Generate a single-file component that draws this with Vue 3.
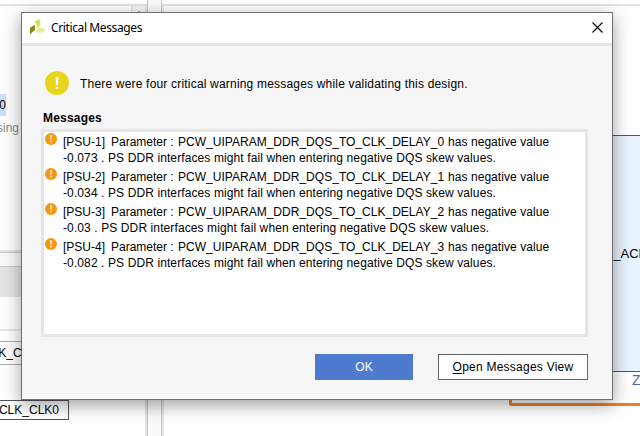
<script setup>
const messages = [
  { id: 1, value: '-0.073', param: 0 },
  { id: 2, value: '-0.034', param: 1 },
  { id: 3, value: '-0.03', param: 2 },
  { id: 4, value: '-0.082', param: 3 },
]
</script>

<template>
  <div class="screen">
    <div class="workspace">
      <div class="left">
        <div class="strip"></div>
        <div class="doc">
          <div class="doctext">
            <span class="sel">0</span>
            <span class="hint">sing</span>
          </div>
          <div class="scroll"><i></i></div>
        </div>
        <div class="gap"></div>
        <div class="tabs"></div>
        <div class="blank"></div>
        <div class="ports">
          <div class="port faint"><span>K_CLK0</span></div>
          <div class="port dark"><span>CLK_CLK0</span></div>
        </div>
      </div>
      <div class="splitter"></div>
      <div class="right">
        <div class="strip"></div>
        <div class="canvas">
          <div class="select"></div>
          <div class="block"><span class="pin">0_ACL</span></div>
          <span class="zynq">Z</span>
        </div>
      </div>
    </div>

    <section class="dialog">
      <header class="title">
        <svg class="logo" width="16" height="16" viewBox="0 0 16 16">
          <path d="M4.2 2.2 9.8 0 10.4 5 8.8 8.2 7.2 8.8 6.6 5.2z" fill="#dbe05a" />
          <path d="M0 8.8 5 5.8V11L0 15.2z" fill="#8a8b0c" />
          <path d="M8 9 10.8 8.2 15.8 11.4 11.5 14 5.8 13.2 6.2 11.2z" fill="#e8eb9c" />
        </svg>
        <span class="name">Critical Messages</span>
        <svg class="close" width="11" height="11" viewBox="0 0 11 11">
          <path d="M.5.5 10.5 10.5M10.5.5.5 10.5" stroke="#000" stroke-width="1.1" />
        </svg>
      </header>
      <div class="summary">
        <svg width="24" height="24" viewBox="0 0 24 24">
          <circle cx="12" cy="12" r="12" fill="#e8d41d" />
          <path d="M10.6 6h2.8l-.4 8h-2z" fill="#fff" />
          <rect x="10.8" y="15.8" width="2.4" height="2.2" fill="#fff" />
        </svg>
        <span>There were four critical warning messages while validating this design.</span>
      </div>
      <h2>Messages</h2>
      <div class="list">
        <div v-for="m in messages" :key="m.id" class="item">
          <svg width="12" height="12" viewBox="0 0 12 12">
            <circle cx="6" cy="6" r="6" fill="#fa9710" />
            <path d="M5 2.3h2l-.3 4.5H5.3z" fill="#fff0d4" />
            <rect x="5.1" y="7.8" width="1.8" height="1.5" fill="#fff0d4" />
          </svg>
          <div class="lines">
            <div class="l1"><span class="tag">[PSU-{{ m.id }}]</span><span class="word">Parameter :</span><span class="param">PCW_UIPARAM_DDR_DQS_TO_CLK_DELAY_{{ m.param }}</span><span class="tail">has negative value</span></div>
            <div class="l2">{{ m.value }} . PS DDR interfaces might fail when entering negative DQS skew values.</div>
          </div>
        </div>
      </div>
      <footer>
        <button class="ok">OK</button>
        <button class="open"><u>O</u>pen Messages View</button>
      </footer>
    </section>
  </div>
</template>

<style>
body { margin: 0; overflow: hidden; }
</style>

<style scoped>
.screen { position: relative; width: 640px; height: 436px; overflow: hidden; background: #fff; font: 12px/16px "Liberation Sans", Arial, sans-serif; color: #000; box-sizing: border-box; }
.screen * { box-sizing: border-box; }
.workspace { display: flex; height: 436px; }
.left { display: flex; flex-direction: column; width: 148px; border-right: 1px solid #c4c4c4; }
.strip { height: 6px; border-bottom: 2px solid #e3e3e3; background: #fff; flex: none; }
.doc { display: flex; justify-content: space-between; height: 247px; border-bottom: 1px solid #c8c8c8; border-right: 2px solid #e5e5e5; box-shadow: inset 0 -2px #e5e5e5; }
.doctext { display: flex; flex-direction: column; width: 20px; padding-top: 88px; }
.sel { width: 6px; height: 22px; line-height: 22px; background: #ccdfff; display: flex; justify-content: flex-end; }
.hint { display: flex; justify-content: flex-end; margin-top: 4px; width: 19px; color: #888; }
.scroll { width: 14px; border-left: 1px solid #ddd; background: #f6f6f6; display: flex; justify-content: center; padding-top: 5px; }
.scroll i { width: 0; height: 0; border: 3px solid transparent; border-top: 0; border-bottom: 3px solid #555; }
.gap { height: 13px; background: #fafafa; }
.tabs { height: 31px; background: #e5e5e5; border-top: 1px solid #c8c8c8; }
.blank { height: 34px; border-bottom: 2px solid #e5e5e5; }
.ports { flex: 1; padding-top: 10px; border-right: 2px solid #e5e5e5; }
.port { display: flex; justify-content: flex-end; align-items: center; }
.faint { width: 60px; height: 24px; border: solid #aaa; border-width: 1px 0; padding-right: 17px; }
.dark { width: 69px; height: 20px; margin-top: 35px; border: 1px solid #555; border-left: 0; padding-right: 9px; }
.splitter { width: 13px; background: #fafafa; }
.right { flex: 1; border-left: 1px solid #c8c8c8; box-shadow: inset 2px 0 #e5e5e5; display: flex; flex-direction: column; }
.canvas { position: relative; flex: 1; overflow: hidden; }
.select { position: absolute; left: 347px; top: 180px; width: 180px; height: 220px; border: 3px solid #f37f21; border-radius: 2px; }
.block { position: absolute; left: 378px; top: 129px; width: 120px; height: 237px; background: #e9f2ff; border: 1px solid #3c589c; }
.pin { position: absolute; left: 65px; top: 110px; font-size: 13px; }
.zynq { position: absolute; left: 470px; top: 366px; font-size: 14px; color: #4868a8; }

.dialog { position: absolute; left: 21px; top: 12px; width: 592px; height: 388px; display: flex; flex-direction: column; background: #f6f6f6; border: 1px solid #707070; box-shadow: 0 5px 17px rgba(0, 0, 0, .38); }
.title { display: flex; align-items: center; flex: none; height: 33px; background: #fff; border-bottom: 3px solid #e5e5e5; padding: 0 9px 0 8px; }
.logo { margin-top: -3px; }
.name { margin-left: 5px; flex: 1; font-family: "Noto Sans", sans-serif; font-size: 12px; letter-spacing: -.38px; }
.close { margin-top: -2px; }
.summary { display: flex; align-items: center; gap: 11px; padding: 25px 0 0 23px; height: 49px; white-space: nowrap; letter-spacing: .19px; }
.summary span { padding-top: 2px; }
h2 { margin: 15px 0 0 21px; font-size: 12px; line-height: 17px; height: 16px; font-weight: bold; letter-spacing: .2px; }
.list { margin: 3px 0 0 19px; width: 547px; height: 208px; background: #fff; border: 3px solid #e5e5e5; padding: 1px 0 0 1px; }
.item { display: flex; height: 35px; gap: 6px; }
.item svg { flex: none; }
.lines { padding-top: 1px; white-space: nowrap; }
.l1, .l2 { line-height: 16px; height: 16px; }
.l1 { display: flex; }
.l2 { letter-spacing: .105px; }
.tag { width: 48px; }
.word { width: 67px; }
.param { width: 270px; letter-spacing: .02px; }
.tail { letter-spacing: .06px; }
footer { display: flex; justify-content: flex-end; gap: 25px; padding: 17px 24px 0 0; }
button { height: 26px; padding: 0; font: 12px "Liberation Sans", Arial, sans-serif; border-radius: 0; }
.ok { width: 98px; border: 0; background: #4f7bcf; color: #fff; }
.open { width: 150px; border: 1px solid #666; background: #fff; color: #000; letter-spacing: .24px; }
u { text-underline-offset: 2px; }
</style>
